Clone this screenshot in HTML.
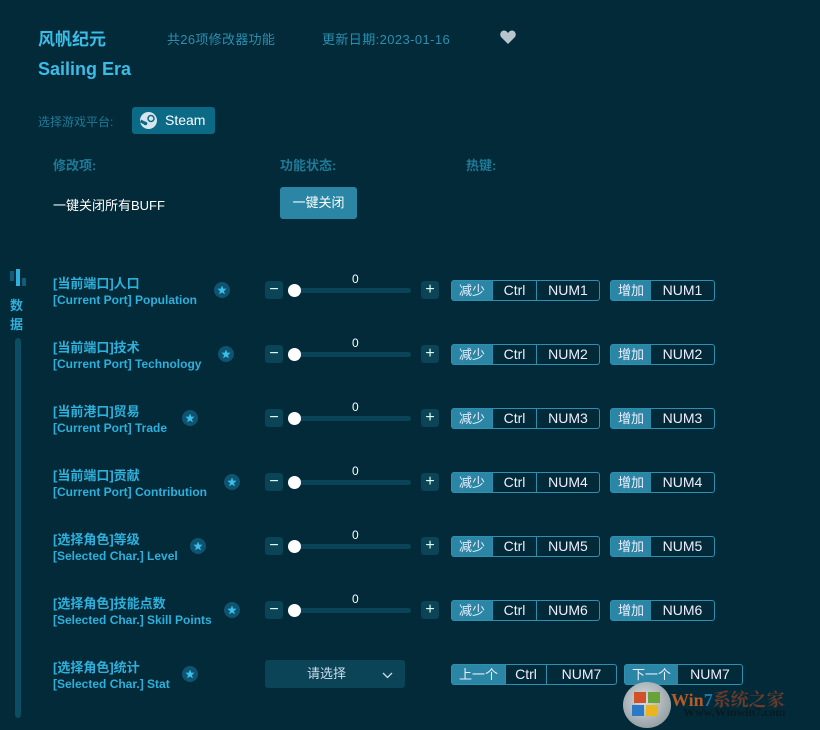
<!DOCTYPE html>
<html><head><meta charset="utf-8"><style>
*{margin:0;padding:0;box-sizing:border-box}
body{width:820px;height:730px;background:#022a38;font-family:"Liberation Sans","Noto Sans CJK SC",sans-serif;position:relative;overflow:hidden;color:#fff}
.a{position:absolute;white-space:nowrap}
.t1{font-size:13px;color:#2fb0dc;font-weight:bold}
.t2{font-size:12px;color:#2fb0dc;font-weight:bold}
.star{position:absolute;width:16px;height:16px;border-radius:50%;background:#0e5470}
.star svg{position:absolute;left:3px;top:3px}
.mb{position:absolute;width:18px;height:18px;background:#0b4456;border-radius:3px;color:#dfe;font-size:16px;line-height:17px;text-align:center}
.tr{position:absolute;height:5px;background:#0b4456;border-radius:3px}
.kn{position:absolute;width:13px;height:13px;border-radius:50%;background:#fff}
.v{position:absolute;font-size:12px;color:#fff}
.kg{position:absolute;height:21px;border:1px solid #2f8fb0;border-radius:3px;display:flex;font-size:14px;line-height:19px;color:#eef}
.kg span{text-align:center;border-left:1px solid #2f8fb0}
.kg span.l{background:#2a86a4;border-left:none;font-size:13px}
</style></head><body>
<div class="a" style="left:38px;top:25px;font-size:17px;font-weight:bold;color:#3bbde8">风帆纪元</div>
<div class="a" style="left:167px;top:29px;font-size:13px;color:#2a8fb0;letter-spacing:0.3px">共26项修改器功能</div>
<div class="a" style="left:322px;top:29px;font-size:13px;color:#2a8fb0;letter-spacing:0.4px">更新日期:2023-01-16</div>
<svg class="a" style="left:500px;top:30px" width="16" height="14" viewBox="0 0 16 14"><path d="M8 14L1.5 7.5C-1 5 0.5 0.5 4 0.5C6 0.5 7.3 2 8 3C8.7 2 10 0.5 12 0.5C15.5 0.5 17 5 14.5 7.5Z" fill="#b8c4cc"/></svg>
<div class="a" style="left:38px;top:59px;font-size:18px;font-weight:bold;color:#3bbde8">Sailing Era</div>
<div class="a" style="left:38px;top:113px;font-size:12px;color:#1f7a98">选择游戏平台:</div>
<div class="a" style="left:132px;top:107px;width:83px;height:27px;background:#0b6a86;border-radius:3px">
<svg style="position:absolute;left:8px;top:5px" width="17" height="17" viewBox="0 0 17 17"><circle cx="8.5" cy="8.5" r="8.5" fill="#d7e6ee"/><circle cx="11" cy="6.5" r="3" fill="none" stroke="#0b6a86" stroke-width="1.5"/><path d="M0.5 9L5.5 11.5" stroke="#0b6a86" stroke-width="3"/><circle cx="5.5" cy="11.5" r="1.8" fill="#0b6a86"/></svg>
<span style="position:absolute;left:33px;top:5px;font-size:14px;color:#fff">Steam</span></div>
<div class="a" style="left:53px;top:155px;font-size:13px;font-weight:bold;color:#1f7a98">修改项:</div>
<div class="a" style="left:280px;top:155px;font-size:13px;font-weight:bold;color:#1f7a98">功能状态:</div>
<div class="a" style="left:466px;top:155px;font-size:13px;font-weight:bold;color:#1f7a98">热键:</div>
<div class="a" style="left:53px;top:195px;font-size:13px;color:#fff">一键关闭所有BUFF</div>
<div class="a" style="left:280px;top:187px;width:77px;height:32px;background:#2a86a4;border-radius:3px;font-size:13px;line-height:32px;text-align:center">一键关闭</div>
<div class="a" style="left:10px;top:271px;width:4px;height:10px;background:#0f5d78"></div>
<div class="a" style="left:16px;top:269px;width:4px;height:17px;background:#2fb0dc"></div>
<div class="a" style="left:22px;top:278px;width:4px;height:8px;background:#0f5d78"></div>
<div class="a" style="left:10px;top:296px;font-size:13px;font-weight:bold;color:#2fb0dc;line-height:19px;width:16px">数<br>据</div>
<div class="a" style="left:15px;top:338px;width:6px;height:380px;background:#0c4d64;border-radius:3px"></div>

<div class="a t1" style="left:53px;top:273px">[当前端口]人口</div><div class="a t2" style="left:53px;top:293px">[Current Port] Population</div><div class="star" style="left:214px;top:282px"><svg width="10" height="10" viewBox="0 0 10 10"><path d="M5 0.5L6.3 3.6L9.6 3.8L7 6L7.9 9.3L5 7.5L2.1 9.3L3 6L0.4 3.8L3.7 3.6Z" fill="#3bbde8"/></svg></div>
<div class="a t1" style="left:53px;top:337px">[当前端口]技术</div><div class="a t2" style="left:53px;top:357px">[Current Port] Technology</div><div class="star" style="left:218px;top:346px"><svg width="10" height="10" viewBox="0 0 10 10"><path d="M5 0.5L6.3 3.6L9.6 3.8L7 6L7.9 9.3L5 7.5L2.1 9.3L3 6L0.4 3.8L3.7 3.6Z" fill="#3bbde8"/></svg></div>
<div class="a t1" style="left:53px;top:401px">[当前港口]贸易</div><div class="a t2" style="left:53px;top:421px">[Current Port] Trade</div><div class="star" style="left:182px;top:410px"><svg width="10" height="10" viewBox="0 0 10 10"><path d="M5 0.5L6.3 3.6L9.6 3.8L7 6L7.9 9.3L5 7.5L2.1 9.3L3 6L0.4 3.8L3.7 3.6Z" fill="#3bbde8"/></svg></div>
<div class="a t1" style="left:53px;top:465px">[当前端口]贡献</div><div class="a t2" style="left:53px;top:485px">[Current Port] Contribution</div><div class="star" style="left:224px;top:474px"><svg width="10" height="10" viewBox="0 0 10 10"><path d="M5 0.5L6.3 3.6L9.6 3.8L7 6L7.9 9.3L5 7.5L2.1 9.3L3 6L0.4 3.8L3.7 3.6Z" fill="#3bbde8"/></svg></div>
<div class="a t1" style="left:53px;top:529px">[选择角色]等级</div><div class="a t2" style="left:53px;top:549px">[Selected Char.] Level</div><div class="star" style="left:190px;top:538px"><svg width="10" height="10" viewBox="0 0 10 10"><path d="M5 0.5L6.3 3.6L9.6 3.8L7 6L7.9 9.3L5 7.5L2.1 9.3L3 6L0.4 3.8L3.7 3.6Z" fill="#3bbde8"/></svg></div>
<div class="a t1" style="left:53px;top:593px">[选择角色]技能点数</div><div class="a t2" style="left:53px;top:613px">[Selected Char.] Skill Points</div><div class="star" style="left:224px;top:602px"><svg width="10" height="10" viewBox="0 0 10 10"><path d="M5 0.5L6.3 3.6L9.6 3.8L7 6L7.9 9.3L5 7.5L2.1 9.3L3 6L0.4 3.8L3.7 3.6Z" fill="#3bbde8"/></svg></div>
<div class="a t1" style="left:53px;top:657px">[选择角色]统计</div><div class="a t2" style="left:53px;top:677px">[Selected Char.] Stat</div><div class="star" style="left:182px;top:666px"><svg width="10" height="10" viewBox="0 0 10 10"><path d="M5 0.5L6.3 3.6L9.6 3.8L7 6L7.9 9.3L5 7.5L2.1 9.3L3 6L0.4 3.8L3.7 3.6Z" fill="#3bbde8"/></svg></div>

<div class="mb" style="left:265px;top:281px">−</div><div class="tr" style="left:290px;top:288px;width:121px"></div><div class="kn" style="left:288px;top:284px"></div><div class="v" style="left:352px;top:272px">0</div><div class="mb" style="left:421px;top:281px">+</div>
<div class="mb" style="left:265px;top:345px">−</div><div class="tr" style="left:290px;top:352px;width:121px"></div><div class="kn" style="left:288px;top:348px"></div><div class="v" style="left:352px;top:336px">0</div><div class="mb" style="left:421px;top:345px">+</div>
<div class="mb" style="left:265px;top:409px">−</div><div class="tr" style="left:290px;top:416px;width:121px"></div><div class="kn" style="left:288px;top:412px"></div><div class="v" style="left:352px;top:400px">0</div><div class="mb" style="left:421px;top:409px">+</div>
<div class="mb" style="left:265px;top:473px">−</div><div class="tr" style="left:290px;top:480px;width:121px"></div><div class="kn" style="left:288px;top:476px"></div><div class="v" style="left:352px;top:464px">0</div><div class="mb" style="left:421px;top:473px">+</div>
<div class="mb" style="left:265px;top:537px">−</div><div class="tr" style="left:290px;top:544px;width:121px"></div><div class="kn" style="left:288px;top:540px"></div><div class="v" style="left:352px;top:528px">0</div><div class="mb" style="left:421px;top:537px">+</div>
<div class="mb" style="left:265px;top:601px">−</div><div class="tr" style="left:290px;top:608px;width:121px"></div><div class="kn" style="left:288px;top:604px"></div><div class="v" style="left:352px;top:592px">0</div><div class="mb" style="left:421px;top:601px">+</div>
<div class="a" style="left:265px;top:660px;width:140px;height:28px;background:#0b4456;border-radius:3px;font-size:13px;color:#cde;line-height:28px"><span style="position:absolute;left:42px">请选择</span><svg style="position:absolute;left:117px;top:12px" width="11" height="7" viewBox="0 0 11 7"><path d="M1 1L5.5 5.5L10 1" fill="none" stroke="#cde" stroke-width="1.3"/></svg></div>

<div class="kg" style="left:451px;top:280px;width:149px"><span class="l" style="width:40px">减少</span><span style="width:44px">Ctrl</span><span style="width:63px">NUM1</span></div><div class="kg" style="left:610px;top:280px;width:105px"><span class="l" style="width:40px">增加</span><span style="width:63px;border:none">NUM1</span></div>
<div class="kg" style="left:451px;top:344px;width:149px"><span class="l" style="width:40px">减少</span><span style="width:44px">Ctrl</span><span style="width:63px">NUM2</span></div><div class="kg" style="left:610px;top:344px;width:105px"><span class="l" style="width:40px">增加</span><span style="width:63px;border:none">NUM2</span></div>
<div class="kg" style="left:451px;top:408px;width:149px"><span class="l" style="width:40px">减少</span><span style="width:44px">Ctrl</span><span style="width:63px">NUM3</span></div><div class="kg" style="left:610px;top:408px;width:105px"><span class="l" style="width:40px">增加</span><span style="width:63px;border:none">NUM3</span></div>
<div class="kg" style="left:451px;top:472px;width:149px"><span class="l" style="width:40px">减少</span><span style="width:44px">Ctrl</span><span style="width:63px">NUM4</span></div><div class="kg" style="left:610px;top:472px;width:105px"><span class="l" style="width:40px">增加</span><span style="width:63px;border:none">NUM4</span></div>
<div class="kg" style="left:451px;top:536px;width:149px"><span class="l" style="width:40px">减少</span><span style="width:44px">Ctrl</span><span style="width:63px">NUM5</span></div><div class="kg" style="left:610px;top:536px;width:105px"><span class="l" style="width:40px">增加</span><span style="width:63px;border:none">NUM5</span></div>
<div class="kg" style="left:451px;top:600px;width:149px"><span class="l" style="width:40px">减少</span><span style="width:44px">Ctrl</span><span style="width:63px">NUM6</span></div><div class="kg" style="left:610px;top:600px;width:105px"><span class="l" style="width:40px">增加</span><span style="width:63px;border:none">NUM6</span></div>
<div class="kg" style="left:451px;top:664px;width:166px"><span class="l" style="width:53px">上一个</span><span style="width:41px">Ctrl</span><span style="width:70px">NUM7</span></div><div class="kg" style="left:624px;top:664px;width:119px"><span class="l" style="width:53px">下一个</span><span style="width:64px;border:none">NUM7</span></div>

<div class="a" style="left:623px;top:682px;width:48px;height:46px;border-radius:50%;background:radial-gradient(circle at 45% 40%,#d8dde0,#7d8a90)"></div>
<div class="a" style="left:634px;top:692px;width:12px;height:11px;background:#d2502a"></div><div class="a" style="left:648px;top:692px;width:12px;height:11px;background:#6aa23a"></div>
<div class="a" style="left:632px;top:705px;width:12px;height:11px;background:#2a7ac8"></div><div class="a" style="left:646px;top:705px;width:12px;height:11px;background:#e8b420"></div>
<div class="a" style="left:671px;top:686px;font-size:18px;font-weight:bold;font-family:'Liberation Serif',serif;color:#b85a26">Win<span style="color:#1a78b0">7</span><span style="color:#6a3a2a;font-family:'Noto Serif CJK SC',serif">系统之家</span></div>
<div class="a" style="left:683px;top:705px;font-size:12px;font-weight:bold;font-family:'Liberation Serif',serif;color:#0a1a20">Www.Winwin7.com</div>
</body></html>
